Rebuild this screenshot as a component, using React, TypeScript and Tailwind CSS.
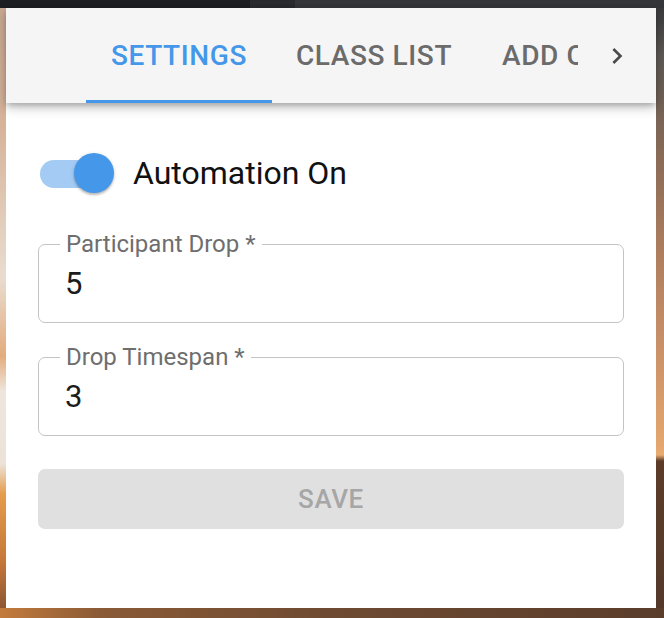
import React from "react";

function Field({ label, value }: { label: string; value: string }) {
  return (
    <div className="relative h-[79px] rounded-[7px] border border-[#c4c4c4] flex items-center pl-[26px]">
      <span className="absolute left-[21px] top-[-14px] bg-white px-[6px] text-[24px] leading-[26px] text-[#6e6e6e]">
        {label}
      </span>
      <span className="text-[31px] leading-none text-[#1c1c1c]">{value}</span>
    </div>
  );
}

export default function App() {
  return (
    <div
      className="w-[664px] h-[618px] flex flex-col overflow-hidden"
      style={{ fontFamily: "Roboto, 'Liberation Sans', sans-serif" }}
    >
      {/* browser top bar */}
      <div className="h-[8px] shrink-0 flex">
        <div className="w-[250px] bg-[#1e1f22]" />
        <div className="w-[45px] bg-[#2a2b2f]" />
        <div className="flex-1 bg-[#35363a]" />
      </div>

      <div className="flex h-[600px] shrink-0">
        <div className="w-[6px] bg-[linear-gradient(to_bottom,#c9a892_0%,#d6b49a_20%,#e9dccf_45%,#e3ac7e_58%,#eee6dd_64%,#ece2d8_76%,#e59c4d_81%,#c7783a_92%,#8e5732_100%)]" />

        {/* popup panel */}
        <div className="w-[650px] bg-white flex flex-col">
          <div className="relative z-10 h-[95px] bg-[#f5f5f5] flex shadow-[0_3px_6px_-1px_rgba(0,0,0,0.25),0_6px_10px_0_rgba(0,0,0,0.12),0_2px_16px_0_rgba(0,0,0,0.08)]">
            <div className="w-[80px] shrink-0" />
            <div className="w-[492px] shrink-0 flex overflow-hidden">
              <div className="relative w-[186px] shrink-0 flex items-center justify-center text-[28px] font-medium tracking-[0.6px] text-[#4597e9]">
                SETTINGS
                <div className="absolute bottom-0 left-0 right-0 h-[3px] bg-[#4597e9]" />
              </div>
              <div className="w-[204px] shrink-0 flex items-center justify-center text-[28px] font-medium tracking-[0.6px] text-[#6b6b6b] whitespace-nowrap">
                CLASS LIST
              </div>
              <div className="shrink-0 flex items-center pl-[26px] text-[28px] font-medium tracking-[0.6px] text-[#6b6b6b] whitespace-nowrap">
                ADD CLASS
              </div>
            </div>
            <div className="flex-1 flex items-center justify-center">
              <svg width="32" height="32" viewBox="0 0 24 24" fill="#4a4a4a">
                <path d="M8.59 16.59 13.17 12 8.59 7.41 10 6l6 6-6 6z" />
              </svg>
            </div>
          </div>

          <div className="flex flex-col px-[32px] pt-[50px]">
            <div className="flex items-center h-[40px]">
              <div className="relative w-[74px] h-[40px] ml-[2px] shrink-0">
                <div className="absolute left-0 top-[7px] w-[68px] h-[28px] rounded-full bg-[#a3cbf4]" />
                <div className="absolute left-[34px] top-0 w-[40px] h-[40px] rounded-full bg-[#4597e9] shadow-[0_2px_2px_rgba(0,0,0,0.2),0_1px_4px_rgba(0,0,0,0.14)]" />
              </div>
              <span className="ml-[19px] text-[32px] leading-none text-[#111111]">Automation On</span>
            </div>

            <div className="mt-[51px]">
              <Field label="Participant Drop *" value="5" />
            </div>
            <div className="mt-[34px]">
              <Field label="Drop Timespan *" value="3" />
            </div>

            <div className="mt-[33px] h-[60px] rounded-[7px] bg-[#e0e0e0] flex items-center justify-center text-[26px] font-medium tracking-[0.6px] text-[#a6a6a6]">
              SAVE
            </div>
          </div>
        </div>

        <div className="w-[8px] bg-[linear-gradient(to_bottom,#3a3a3d_0%,#5e5a56_8%,#8a6b57_25%,#b07f5f_42%,#c78f68_55%,#e4a66e_73%,#e9ac72_74.5%,#5c3c29_75.5%,#54392a_100%)]" />
      </div>

      <div className="h-[10px] shrink-0 bg-[linear-gradient(to_right,#c47b3c_0%,#8a5a36_15%,#6e4a32_50%,#5a3d2b_100%)]" />
    </div>
  );
}
